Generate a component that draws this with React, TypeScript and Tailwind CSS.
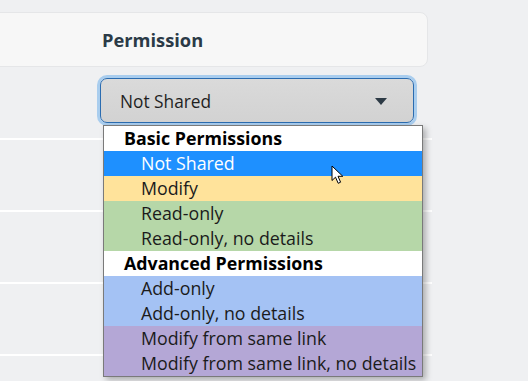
import { memo } from "react";

interface Option {
  label: string;
  bg: string;
  selected?: boolean;
}

interface Group {
  title: string;
  options: Option[];
}

const groups: Group[] = [
  {
    title: "Basic Permissions",
    options: [
      { label: "Not Shared", bg: "bg-[#1e90ff]", selected: true },
      { label: "Modify", bg: "bg-[#ffe39b]" },
      { label: "Read-only", bg: "bg-[#b6d7a8]" },
      { label: "Read-only, no details", bg: "bg-[#b6d7a8]" },
    ],
  },
  {
    title: "Advanced Permissions",
    options: [
      { label: "Add-only", bg: "bg-[#a4c2f4]" },
      { label: "Add-only, no details", bg: "bg-[#a4c2f4]" },
      { label: "Modify from same link", bg: "bg-[#b4a7d6]" },
      { label: "Modify from same link, no details", bg: "bg-[#b4a7d6]" },
    ],
  },
];

const Cursor = () => (
  <svg width="14" height="20" viewBox="0 0 14 20" className="absolute left-[331px] top-[165px]">
    <path
      d="M1 1 L1 15.5 L4.5 12.2 L7.2 18.3 L9.6 17.2 L7 11.3 L11.8 11.3 Z"
      fill="#fff"
      stroke="#000"
      strokeWidth="1"
      strokeLinejoin="round"
    />
  </svg>
);

const Menu = memo(() => (
  <div className="absolute left-[103px] top-[125px] w-[320px] border border-[#7a7a7a] bg-white shadow-[3px_3px_6px_rgba(0,0,0,0.28)]">
    {groups.map((g) => (
      <div key={g.title}>
        <div className="h-[25px] pl-[20px] text-[17.8px] font-bold leading-[25px] text-black">{g.title}</div>
        {g.options.map((o) => (
          <div
            key={o.label}
            className={`h-[25px] pl-[37px] text-[17.8px] leading-[25px] whitespace-nowrap ${o.bg} ${
              o.selected ? "text-white" : "text-[#1b1b1b]"
            }`}
          >
            {o.label}
          </div>
        ))}
      </div>
    ))}
  </div>
));

export default function App() {
  return (
    <div
      className="relative h-[381px] w-[528px] overflow-hidden bg-[#eff0f2]"
      style={{ fontFamily: '"Open Sans", "Noto Sans", sans-serif' }}
    >
      <div className="w-[432px]">
        <div className="ml-[-20px] mt-[12px] flex h-[55px] w-[448px] items-center rounded-lg border border-[#e5e6e8] bg-[#f7f7f7] pl-[121px]">
          <span className="text-[18.3px] font-bold text-[#2b3a47]">Permission</span>
        </div>
        <div className="h-[73px] border-b-2 border-white pl-[100px] pt-[11px]">
          <div className="flex h-[45px] w-[314px] items-center justify-between rounded-[7px] border border-[#2b6cb0] bg-gradient-to-b from-[#dadada] to-[#d2d2d2] pl-[19px] pr-[26px] pt-[3px] ring-[3px] ring-[#a9cdee]">
            <span className="text-[17.3px] text-[#1f1f1f]">Not Shared</span>
            <svg width="12" height="7" viewBox="0 0 12 7" className="-mt-[2px]">
              <path d="M0 0 H12 L6 7 Z" fill="#2d3a45" />
            </svg>
          </div>
        </div>
        <div className="h-[72px] border-b-2 border-white" />
        <div className="h-[72px] border-b-2 border-white" />
        <div className="h-[72px] border-b-2 border-white" />
      </div>
      <Menu />
      <Cursor />
    </div>
  );
}
